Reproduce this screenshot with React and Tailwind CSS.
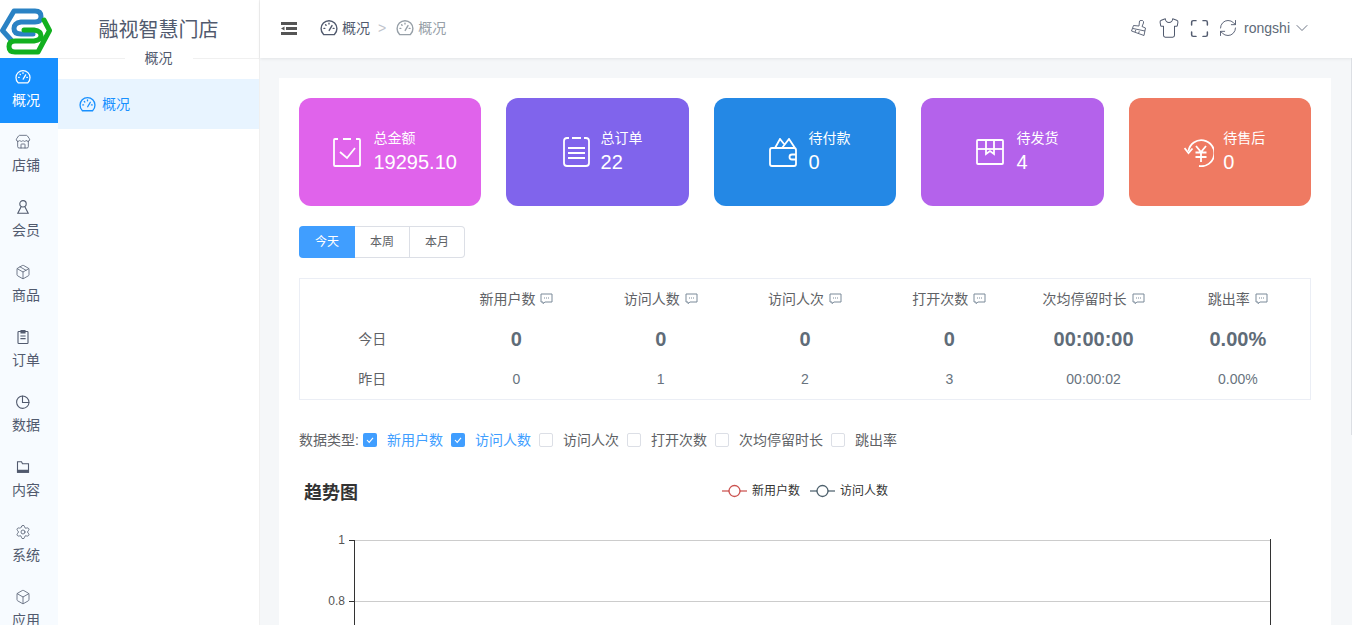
import { Box, ChevronDown, Maximize, Package, RefreshCw, Settings, Shirt, Store } from "lucide-react";

const FONT = "font-['Liberation_Sans','Noto_Sans_CJK_SC',sans-serif]";

function GaugeIcon({ className }) {
  return (
    <svg viewBox="0 0 18 18" fill="none" stroke="currentColor" strokeWidth="1.4" strokeLinecap="round" className={className}>
      <path d="M3.6 15.6A7.9 7.9 0 0 1 1.1 9.6a7.9 7.9 0 0 1 15.8 0 7.9 7.9 0 0 1-2.5 6z" />
      <path d="M9.2 11.4 12 6.6" />
      <path d="M4 9.4h.8M13.2 9.4h.8M5.6 5.8l.5.5M9 4.2v.8" />
    </svg>
  );
}

function PersonIcon({ className }) {
  return (
    <svg viewBox="0 0 16 16" fill="none" stroke="currentColor" strokeWidth="1.1" className={className}>
      <circle cx="8" cy="4.8" r="3.2" />
      <path d="M6 8 2.8 14.2h10.4L10 8" />
    </svg>
  );
}

function PieIcon({ className }) {
  return (
    <svg viewBox="0 0 16 16" fill="none" stroke="currentColor" strokeWidth="1.1" className={className}>
      <path d="M7.5 2A6.2 6.2 0 1 0 14 8.500H7.500z" />
      <path d="M7.500 2A6.500 6.500 0 0 1 14 8.500" />
    </svg>
  );
}

function ClipIcon({ className }) {
  return (
    <svg viewBox="0 0 16 16" fill="none" stroke="currentColor" strokeWidth="1.1" className={className}>
      <rect x="3" y="2.500" width="10" height="12" rx="0.8" />
      <path d="M6 1.500h4v2.400H6z" fill="currentColor" />
      <path d="M5.400 7h5.200M5.400 9.600h5.200" />
    </svg>
  );
}

function FolderIcon({ className }) {
  return (
    <svg viewBox="0 0 16 16" fill="none" stroke="currentColor" strokeWidth="1.1" className={className}>
      <path d="M2.500 2.800h4l1 2h6v8.400h-11z" />
      <path d="M2.500 11.400h11v1.800h-11z" fill="currentColor" />
    </svg>
  );
}

function Logo() {
  return (
    <svg viewBox="0 0 52 52" fill="none" strokeWidth="5" strokeLinecap="round" strokeLinejoin="round" className="h-[52px] w-[52px]">
      <path d="M12 38 2.500 27.500 14 8h21q6 0 6 5.500T35 19H21q-7 1-7 6.500t7 5.500h12" stroke="#2a82c4" />
      <path d="M44 17 49.500 27.500 38 49H15q-6 0-6-5.500T15 38h19q7-1 7-5.500T34 27H24" stroke="#12b01f" />
    </svg>
  );
}

const NAV = [
  { label: "概况", icon: GaugeIcon, active: true },
  { label: "店铺", icon: Store },
  { label: "会员", icon: PersonIcon },
  { label: "商品", icon: Package },
  { label: "订单", icon: ClipIcon },
  { label: "数据", icon: PieIcon },
  { label: "内容", icon: FolderIcon },
  { label: "系统", icon: Settings },
  { label: "应用", icon: Box },
];

function CalendarCheck() {
  return (
    <svg viewBox="0 0 28 29" fill="none" stroke="white" strokeWidth="1.8" className="h-[29px] w-[28px]">
      <path d="M5 1H2Q1 1 1 2v25q0 1 1 1h24q1 0 1-1V2q0-1-1-1h-3M10 1h8" />
      <path d="m7 14 7 6 8-10" />
    </svg>
  );
}

function OrderList() {
  return (
    <svg viewBox="0 0 27 30" fill="none" stroke="white" strokeWidth="1.8" className="h-[30px] w-[27px]">
      <path d="M6 1H4Q1 1 1 4v22q0 3 3 3h19q3 0 3-3V4q0-3-3-3h-2M9 1h9" />
      <path d="M5 11h17M5 16h17M5 21h17" />
    </svg>
  );
}

function Wallet() {
  return (
    <svg viewBox="0 0 28 29" fill="none" stroke="white" strokeWidth="1.8" className="h-[29px] w-[28px]">
      <path d="M3 28q-2 0-2-2V12q0-2 2-2h22q2 0 2 2v14q0 2-2 2z" />
      <path d="m6 10 5-9 4 5M13 10l7-9 6 9" />
      <path d="M27 16.500h-4a2.500 2.500 0 0 0 0 5h4" />
    </svg>
  );
}

function Parcel() {
  return (
    <svg viewBox="0 0 28 26" fill="none" stroke="white" strokeWidth="1.8" className="h-[26px] w-[28px]">
      <rect x="1" y="1" width="26" height="24" rx="1" />
      <path d="M1 10h26" />
      <path d="M10 1v14l4-3 4 3V1" />
    </svg>
  );
}

function Refund() {
  return (
    <svg viewBox="0 0 30 29" fill="none" stroke="white" strokeWidth="1.8" className="h-[29px] w-[30px]">
      <path d="M4.500 13A13 13 0 1 1 15 28" />
      <path d="m0.500 10 4 5 4-4.500" />
      <path d="m12 8 5 6 5-6M11.500 14.500h11M11.500 19h11M17 14v10" />
    </svg>
  );
}

const CARDS = [
  { label: "总金额", value: "19295.10", icon: CalendarCheck, bg: "bg-[#e063eb]", gap: "gap-[12px]" },
  { label: "总订单", value: "22", icon: OrderList, bg: "bg-[#8064ec]", gap: "gap-[11px]" },
  { label: "待付款", value: "0", icon: Wallet, bg: "bg-[#2488e5]", gap: "gap-[11px]" },
  { label: "待发货", value: "4", icon: Parcel, bg: "bg-[#b462eb]", gap: "gap-[12px]" },
  { label: "待售后", value: "0", icon: Refund, bg: "bg-[#ef7a62]", gap: "gap-[9px]" },
];

const COLUMNS = [
  { label: "新用户数", today: "0", yesterday: "0" },
  { label: "访问人数", today: "0", yesterday: "1" },
  { label: "访问人次", today: "0", yesterday: "2" },
  { label: "打开次数", today: "0", yesterday: "3" },
  { label: "次均停留时长", today: "00:00:00", yesterday: "00:00:02" },
  { label: "跳出率", today: "0.00%", yesterday: "0.00%" },
];

const DATA_TYPES = [
  { label: "新用户数", checked: true },
  { label: "访问人数", checked: true },
  { label: "访问人次" },
  { label: "打开次数" },
  { label: "次均停留时长" },
  { label: "跳出率" },
];

function CommentIcon() {
  return (
    <svg viewBox="0 0 13 12" fill="none" stroke="#7b8a99" strokeWidth="1" className="ml-[5px] h-[12px] w-[13px]">
      <path d="M1 1h11v8H5l-2 1.600V9H1z" />
      <path d="M4 5h1M6 5h1M8 5h1" />
    </svg>
  );
}

function LegendItem({ color, label }) {
  return (
    <div className="flex items-center">
      <svg viewBox="0 0 25 14" fill="none" className="h-[14px] w-[25px]">
        <path d="M0 7h25" stroke={color} strokeOpacity="0.7" strokeWidth="1.500" />
        <circle cx="12.500" cy="7" r="5.500" fill="white" stroke={color} strokeOpacity="0.85" strokeWidth="1.300" />
      </svg>
      <span className="ml-[5px] text-xs text-[#333]">{label}</span>
    </div>
  );
}

function Chart() {
  return (
    <svg viewBox="0 0 1012 110" className="mt-[3px] block h-[110px] w-[1012px]">
      <path d="M55 25.500h916M55 86.500h916" stroke="#ccc" />
      <path d="M50 25.500h5M50 86.500h5" stroke="#333" />
      <path d="M55.500 25v85M971.500 24v86" stroke="#333" />
      <text x="46" y="29" textAnchor="end" fontSize="12" fill="#555">1</text>
      <text x="46" y="90" textAnchor="end" fontSize="12" fill="#555">0.8</text>
    </svg>
  );
}

export default function App() {
  return (
    <div className={`${FONT} flex h-[625px] w-[1352px] overflow-hidden bg-white text-sm text-[#515a6e]`}>
      <aside className="flex w-[58px] shrink-0 flex-col bg-[#f7fbff]">
        <div className="flex h-[58px] shrink-0 items-center bg-white">
          <Logo />
        </div>
        {NAV.map((item) => {
          const Icon = item.icon;
          return (
            <div
              key={item.label}
              className={`flex h-[65px] shrink-0 flex-col items-center pr-[6px] pt-[11px] ${item.active ? "bg-[#1890ff] text-white" : ""}`}
            >
              <Icon className="mr-[6px] h-[16px] w-[16px]" strokeWidth={1.2} />
              <span className="mt-[4px] leading-[22px]">{item.label}</span>
            </div>
          );
        })}
      </aside>

      <aside className="w-[202px] shrink-0 border-r border-[#f0f0f0]">
        <div className="flex h-[58px] items-center justify-center pt-[2px] text-[20px] text-[#515a6e]">融视智慧门店</div>
        <div className="flex h-0 items-center">
          <div className="flex-1 border-t border-[#f0f0f0]" />
          <span className="px-5">概况</span>
          <div className="flex-1 border-t border-[#f0f0f0]" />
        </div>
        <div className="mt-[21px] flex h-[50px] items-center bg-[#e8f4ff] pl-[21px] text-[#1890ff]">
          <GaugeIcon className="h-[17px] w-[17px]" />
          <span className="ml-[6px]">概况</span>
        </div>
      </aside>

      <main className="relative flex min-w-0 flex-1 flex-col bg-[#f5f7f9]">
        <header className="flex h-[58px] shrink-0 items-center bg-white pb-[2px] pl-[21px] pr-[40px] shadow-[0_1px_3px_rgba(0,0,0,0.08)]">
          <svg viewBox="0 0 16 13" className="h-[13px] w-[16px]" fill="#555">
            <path d="M0 0h16v3H0zM5 5h11v3H5zM0 10h16v3H0zM0 6.500l3.500-2v4z" />
          </svg>
          <GaugeIcon className="ml-[23px] h-[18px] w-[18px] text-[#515a6e]" />
          <span className="ml-[4px]">概况</span>
          <span className="ml-[8px] text-[#c0c4cc]">&gt;</span>
          <GaugeIcon className="ml-[10px] h-[18px] w-[18px] text-[#97a0a8]" />
          <span className="ml-[4px] text-[#97a0a8]">概况</span>
          <div className="ml-auto flex items-center">
            <svg viewBox="0 0 15 16" fill="none" stroke="#515a6e" strokeWidth="0.9" className="h-[16px] w-[15px]">
              <path d="M8.500 1Q10 0 11.500.5 13 1.500 12.500 3L11 6.500 14.500 8 13 15.500.5 11 2.500 5.500 8 6z" />
              <path d="M2 8.500l12 2.500M4 12l.8-2M7.500 13.500l.8-2.200" />
            </svg>
            <Shirt className="ml-[12px] h-[22px] w-[22px]" strokeWidth={1.1} />
            <Maximize className="ml-[9px] h-[21px] w-[21px]" strokeWidth={1.7} />
            <RefreshCw className="ml-[8px] h-[20px] w-[20px]" strokeWidth={1.1} />
            <span className="ml-[6px] text-[#606a78]">rongshi</span>
            <ChevronDown className="ml-[2px] h-[20px] w-[20px]" strokeWidth={1} />
          </div>
        </header>

        <section className="ml-[19px] mr-[21px] mt-[20px] flex-1 bg-white px-[20px] pt-[20px] text-[#606266]">
          <div className="grid grid-cols-5 gap-[25px]">
            {CARDS.map((card) => {
              const Icon = card.icon;
              return (
                <div key={card.label} className={`flex h-[108px] items-center justify-center rounded-[12px] pl-[10px] text-white ${card.bg} ${card.gap}`}>
                  <Icon />
                  <div>
                    <div className="leading-[20px]">{card.label}</div>
                    <div className="text-[20px] leading-[28px]">{card.value}</div>
                  </div>
                </div>
              );
            })}
          </div>

          <div className="mt-[20px] flex h-[32px] w-[166px] text-xs">
            <div className="flex w-[56px] items-center justify-center rounded-l-[4px] bg-[#409eff] text-white">今天</div>
            <div className="flex w-[55px] items-center justify-center border-y border-r border-[#dcdfe6]">本周</div>
            <div className="flex w-[55px] items-center justify-center rounded-r-[4px] border-y border-r border-[#dcdfe6]">本月</div>
          </div>

          <div className="mt-[20px] grid h-[122px] grid-cols-7 grid-rows-3 border border-[#ebeef5] text-center">
            <div />
            {COLUMNS.map((col) => (
              <div key={col.label} className="flex items-center justify-center">
                {col.label}
                <CommentIcon />
              </div>
            ))}
            <div className="flex items-center justify-center">今日</div>
            {COLUMNS.map((col) => (
              <div key={col.label} className="flex items-center justify-center text-[20px] font-bold text-[#5f6c78]">
                {col.today}
              </div>
            ))}
            <div className="flex items-center justify-center">昨日</div>
            {COLUMNS.map((col) => (
              <div key={col.label} className="flex items-center justify-center text-[#68737e]">
                {col.yesterday}
              </div>
            ))}
          </div>

          <div className="mt-[30px] flex h-[20px] items-center">
            <span className="mr-[4px]">数据类型:</span>
            {DATA_TYPES.map((item) => (
              <div key={item.label} className="mr-[8px] flex items-center">
                {item.checked ? (
                  <svg viewBox="0 0 14 14" className="h-[14px] w-[14px]">
                    <rect width="14" height="14" rx="2" fill="#409eff" />
                    <path d="m4 7 2.200 2.400L10 4.800" fill="none" stroke="white" strokeWidth="1.100" />
                  </svg>
                ) : (
                  <div className="h-[14px] w-[14px] rounded-[2px] border border-[#dcdfe6]" />
                )}
                <span className={`ml-[10px] ${item.checked ? "text-[#409eff]" : ""}`}>{item.label}</span>
              </div>
            ))}
          </div>

          <div className="mt-[30px] flex h-[32px] items-start">
            <div className="ml-[5px] text-[18px] font-bold leading-[26px] text-[#333]">趋势图</div>
            <div className="ml-[364px] mt-[3px] flex gap-[10px]">
              <LegendItem color="#c23531" label="新用户数" />
              <LegendItem color="#2f4554" label="访问人数" />
            </div>
          </div>
          <Chart />
        </section>

        <div className="absolute right-0 top-[58px] h-[377px] w-[1px] bg-[#dcdfe4]" />
      </main>
    </div>
  );
}
